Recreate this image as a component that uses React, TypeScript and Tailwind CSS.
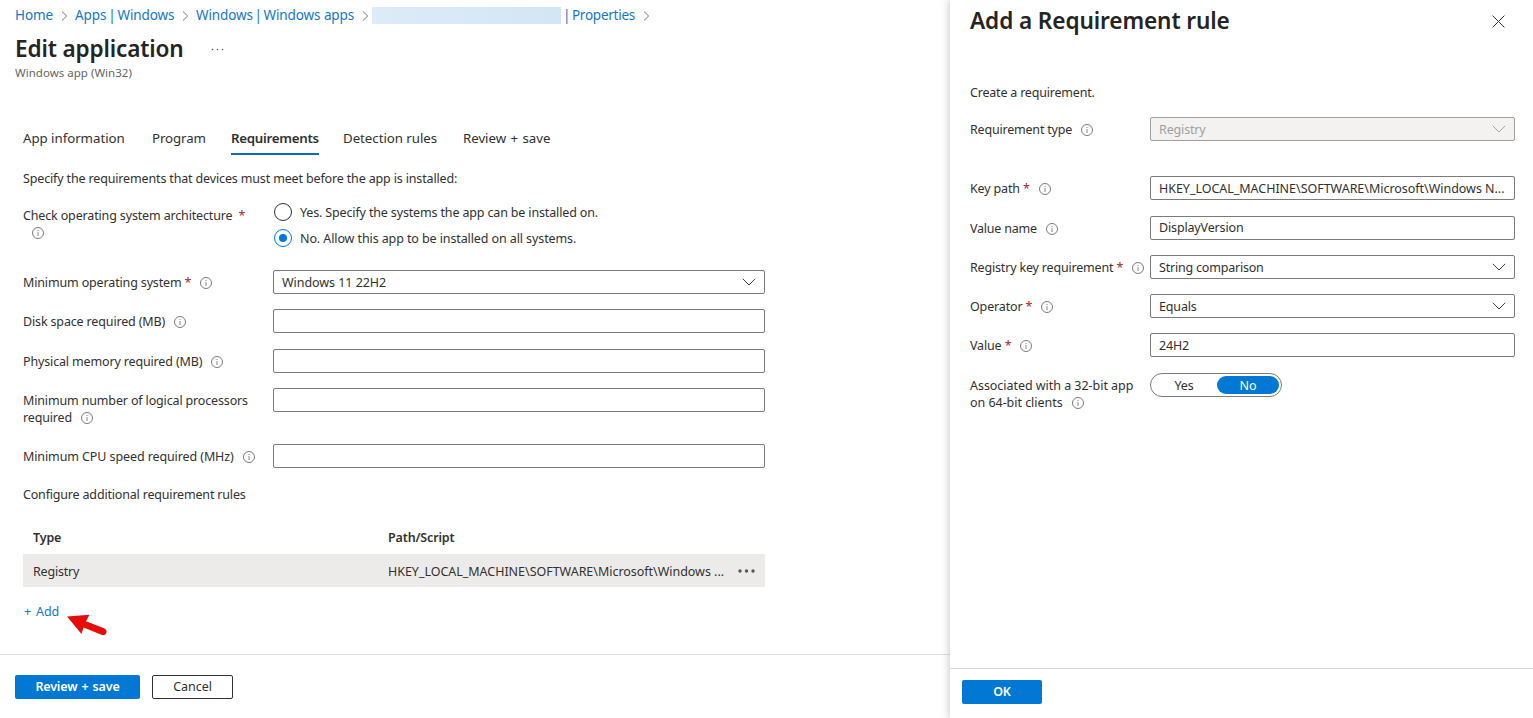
import type { ReactNode } from "react";

function InfoIcon({ className = "" }: { className?: string }) {
  return (
    <svg className={`inline-block shrink-0 ${className}`} width="12" height="12" viewBox="0 0 12 12" fill="none">
      <circle cx="6" cy="6" r="5.5" stroke="#6e6c6a" strokeWidth="0.9" />
      <path d="M6 5v4" stroke="#8a8886" strokeWidth="1" />
      <path d="M6 3v1.1" stroke="#8a8886" strokeWidth="1.1" />
    </svg>
  );
}

function LabelInfo() {
  return <InfoIcon className="relative -top-px ml-[9px]" />;
}

function Crumb() {
  return (
    <svg className="shrink-0" width="7" height="10" viewBox="0 0 7 10" fill="none">
      <path d="M1 0.5L5.7 5L1 9.5" stroke="#777" strokeWidth="1" />
    </svg>
  );
}

function Chevron({ color = "#444" }: { color?: string }) {
  return (
    <svg className="shrink-0" width="14" height="8" viewBox="0 0 14 8" fill="none">
      <path d="M0.8 0.8L7 7L13.2 0.8" stroke={color} strokeWidth="1" />
    </svg>
  );
}

function Star({ className = "" }: { className?: string }) {
  return <span className={`text-[#a4262c] ${className}`}>*</span>;
}

function Box({ children, select, disabled }: { children?: ReactNode; select?: boolean; disabled?: boolean }) {
  return (
    <div
      className={`flex h-6 flex-1 items-center justify-between rounded-[2px] border pr-2 pl-2 ${
        disabled ? "border-[#a19f9d] bg-[#f3f2f1] text-[#a19f9d]" : "border-[#7d7b79] bg-white"
      }`}
    >
      <span className="whitespace-nowrap">{children}</span>
      {select && <Chevron color={disabled ? "#a8a6a4" : "#444"} />}
    </div>
  );
}

function Row({ label, wide, className, children }: { label: ReactNode; wide?: boolean; className: string; children: ReactNode }) {
  return (
    <div className={`flex items-start ${className}`}>
      <div className={`shrink-0 pt-1 leading-[17px] whitespace-nowrap ${wide ? "w-[250px]" : "w-[180px]"}`}>{label}</div>
      {children}
    </div>
  );
}

export default function App() {
  return (
    <div className="flex h-[718px] w-[1533px] overflow-hidden bg-white font-['Noto_Sans','Open_Sans',sans-serif] text-[12.5px] leading-[17px] tracking-[-0.15px] text-[#323130]">
      <main className="flex w-[950px] shrink-0 flex-col">
        <nav className="flex h-[31px] items-center pl-[15px] text-[13.5px] tracking-[-0.1px] whitespace-nowrap text-[#1378c8]">
          <span className="w-[46px]">Home</span>
          <Crumb />
          <span className="ml-[7px] w-[107px] [word-spacing:-1.5px]">Apps | Windows</span>
          <Crumb />
          <span className="ml-[7px] w-[166px]">
            <span className="[word-spacing:-1.8px]">Windows | Windows</span> apps
          </span>
          <Crumb />
          <span className="ml-[3px] h-[17px] w-[189px] bg-linear-to-r from-[#deebf9] to-[#d2e6f3]" />
          <span className="ml-[2px] w-[80px] tracking-[-0.25px] [word-spacing:-1.5px]">| Properties</span>
          <Crumb />
        </nav>
        <header className="h-[94px] pl-[15px]">
          <div className="flex h-[34px] items-center">
            <h1 className="w-[196px] pt-0.5 text-[22.6px] leading-[34px] font-semibold whitespace-nowrap text-[#252423]">Edit application</h1>
            <svg className="mt-0.5" width="13" height="3" viewBox="0 0 13 3" fill="#555">
              <circle cx="1.5" cy="1.5" r="0.8" />
              <circle cx="6.5" cy="1.5" r="0.8" />
              <circle cx="11.5" cy="1.5" r="0.8" />
            </svg>
          </div>
          <p className="text-[11.5px] leading-4 tracking-[0.02px] text-[#666462]">Windows app (Win32)</p>
        </header>

        <div className="flex h-[30px] pl-[23px] text-[13.3px] leading-[27px] tracking-[-0.05px] whitespace-nowrap">
          <span className="w-[129px]">App information</span>
          <span className="w-[79px] tracking-[-0.1px]">Program</span>
          <span className="mr-6 w-[88px] border-b-2 border-[#0f6cbd] font-semibold tracking-[-0.28px]">Requirements</span>
          <span className="w-[120px]">Detection rules</span>
          <span className="[word-spacing:1px]">Review + save</span>
        </div>

        <section className="w-[765px] pl-[23px]">
          <p className="pt-[15px] pb-[13px]">Specify the requirements that devices must meet before the app is installed:</p>
          <div className="flex h-[70px]">
            <div className="w-[250px] pt-[7px] leading-[18px]">
              Check operating system architecture <Star className="ml-[3px]" />
              <div className="-mt-0.5 pl-[9px]">
                <InfoIcon className="block" />
              </div>
            </div>
            <div className="flex flex-col gap-2 pt-[3px] pl-px">
              <div className="flex h-[18px] items-center gap-2">
                <span className="size-[18px] rounded-full border border-[#323130]" />
                Yes. Specify the systems the app can be installed on.
              </div>
              <div className="flex h-[18px] items-center gap-2 tracking-[-0.1px]">
                <span className="flex size-[18px] items-center justify-center rounded-full border border-[#0078d4]">
                  <span className="size-2 rounded-full bg-[#0078d4]" />
                </span>
                No. Allow this app to be installed on all systems.
              </div>
            </div>
          </div>
          <Row wide className="h-[39px]" label={<>Minimum operating system <Star /><LabelInfo /></>}>
            <Box select><span className="tracking-[-0.05px]">Windows 11 22H2</span></Box>
          </Row>
          <Row wide className="h-[40px]" label={<>Disk space required (MB)<LabelInfo /></>}>
            <Box />
          </Row>
          <Row wide className="h-[39px]" label={<>Physical memory required (MB)<LabelInfo /></>}>
            <Box />
          </Row>
          <Row wide className="h-[56px]" label={<>Minimum number of logical processors<br />required<LabelInfo /></>}>
            <Box />
          </Row>
          <Row wide className="h-[42px]" label={<><span className="tracking-[-0.1px]">Minimum CPU speed required (MHz)</span><LabelInfo /></>}>
            <Box />
          </Row>
          <p className="tracking-[-0.18px]">Configure additional requirement rules</p>
          <div className="mt-[18px] flex h-[33px] items-center px-[10px] font-semibold">
            <span className="w-[355px]">Type</span>
            <span>Path/Script</span>
          </div>
          <div className="flex h-[33px] items-center bg-[#edebe9] px-[10px] pt-px">
            <span className="w-[355px] tracking-[-0.2px]">Registry</span>
            <span className="tracking-[-0.03px] whitespace-nowrap">HKEY_LOCAL_MACHINE\SOFTWARE\Microsoft\Windows ...</span>
            <svg className="-mt-px ml-auto" width="17" height="4" viewBox="0 0 17 4" fill="#555">
              <circle cx="2" cy="2" r="1.7" />
              <circle cx="8.5" cy="2" r="1.7" />
              <circle cx="15" cy="2" r="1.7" />
            </svg>
          </div>
          <div className="flex pt-4">
            <span className="w-[44px] pl-px tracking-normal whitespace-nowrap text-[#1378c8] [word-spacing:1.5px]">+ Add</span>
            <svg className="mt-[11px]" width="42" height="22" viewBox="0 0 42 22" fill="#e60c0c">
              <path d="M0 2.5L22.5 0.7L19 7.2L37 14.2C41.5 16 39.7 22 35 21L16.5 13.5L14.5 20Z" />
            </svg>
          </div>
        </section>

        <footer className="mt-auto flex h-16 gap-3 border-t border-[#dcdcdc] pt-5 pl-[15px] leading-[16px]">
          <button className="h-6 w-[125px] rounded-[2px] bg-[#0078d4] pb-px font-semibold text-white [word-spacing:1px]">Review + save</button>
          <button className="h-6 w-[81px] rounded-[2px] border border-[#323130] pb-px tracking-[-0.05px]">Cancel</button>
        </footer>
      </main>

      <aside className="relative flex w-[583px] shrink-0 flex-col bg-white shadow-[-1px_0_8px_rgba(0,0,0,0.22)]">
        <header className="flex h-[42px] items-center justify-between pr-7 pl-5">
          <h2 className="text-[22.6px] leading-[34px] font-semibold tracking-[-0.1px] whitespace-nowrap text-[#252423]">Add a Requirement rule</h2>
          <svg width="13" height="13" viewBox="0 0 13 13" fill="none">
            <path d="M0.6 0.6L12.4 12.4M12.4 0.6L0.6 12.4" stroke="#333" strokeWidth="1" />
          </svg>
        </header>
        <section className="w-[565px] pl-5">
          <p className="pt-[42px] pb-4 tracking-[-0.2px]">Create a requirement.</p>
          <Row className="h-[59px]" label={<><span className="tracking-[-0.2px]">Requirement type</span><LabelInfo /></>}>
            <Box select disabled>Registry</Box>
          </Row>
          <Row className="h-[40px]" label={<>Key path <Star /><LabelInfo /></>}>
            <Box><span className="tracking-[-0.03px]">HKEY_LOCAL_MACHINE\SOFTWARE\Microsoft\Windows N...</span></Box>
          </Row>
          <Row className="h-[39px]" label={<><span className="tracking-[-0.22px]">Value name</span><LabelInfo /></>}>
            <Box><span className="relative -top-px">DisplayVersion</span></Box>
          </Row>
          <Row className="h-[39px]" label={<><span className="tracking-[-0.18px]">Registry key requirement </span><Star /><LabelInfo /></>}>
            <Box select><span className="tracking-[-0.2px]">String comparison</span></Box>
          </Row>
          <Row className="h-[39px]" label={<>Operator <Star /><LabelInfo /></>}>
            <Box select>Equals</Box>
          </Row>
          <Row className="h-[40px]" label={<>Value <Star /><LabelInfo /></>}>
            <Box>24H2</Box>
          </Row>
          <Row className="h-[40px]" label={<><span className="tracking-[-0.04px]">Associated with a 32-bit app<br />on 64-bit clients</span><LabelInfo /></>}>
            <div className="flex h-6 w-[132px] items-center rounded-full border border-[#7d7b79] pr-0.5 text-center">
              <span className="w-[66px]">Yes</span>
              <span className="h-[18px] flex-1 rounded-full bg-[#0078d4] leading-[19px] text-white">No</span>
            </div>
          </Row>
        </section>
        <footer className="mt-auto h-[50px] border-t border-[#dcdcdc] pt-[11px] pl-3 leading-[16px]">
          <button className="h-6 w-20 rounded-[2px] bg-[#0078d4] pb-px font-semibold text-white">OK</button>
        </footer>
      </aside>
    </div>
  );
}
